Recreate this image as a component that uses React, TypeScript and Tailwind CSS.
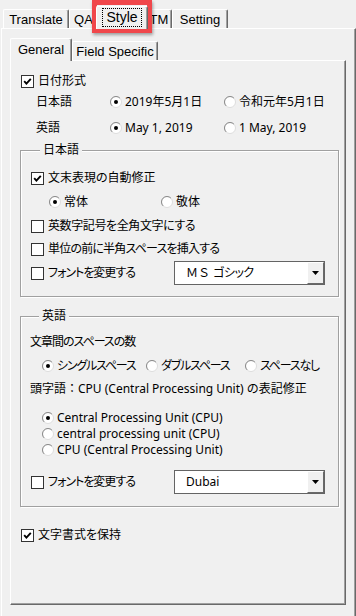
import React from 'react';

const Check = ({ checked }: { checked?: boolean }) => (
  <span className="flex h-[13px] w-[13px] shrink-0 items-center justify-center border border-[#333] bg-white">
    {checked ? (
      <svg width="9" height="9" viewBox="0 0 9 9">
        <path d="M1.2 4.2 L3.4 6.6 L7.8 1.8" fill="none" stroke="#000" strokeWidth="1.9" />
      </svg>
    ) : null}
  </span>
);

const Radio = ({ checked }: { checked?: boolean }) => (
  <svg width="12" height="12" viewBox="0 0 12 12" className="shrink-0">
    <circle cx="6" cy="6" r="5.5" fill="#fff" stroke="#dcdcdc" />
    <path d="M2.1 9.9 A5.5 5.5 0 0 1 9.9 2.1" fill="none" stroke="#8a8a8a" />
    {checked ? <circle cx="6" cy="6" r="2" fill="#000" /> : null}
  </svg>
);

const Select = ({ children }: { children: React.ReactNode }) => (
  <div className="flex h-[24px] w-[151px] items-center border border-[#646464] bg-white">
    <span className="flex-1 pl-[11px]">{children}</span>
    <span className="flex h-full w-[17px] items-center justify-center border-l border-t border-l-white border-t-white border-r border-b border-r-[#696969] border-b-[#696969] bg-[#f0f0f0]">
      <svg width="7" height="4" viewBox="0 0 7 4">
        <path d="M0 0 H7 L3.5 4 Z" fill="#000" />
      </svg>
    </span>
  </div>
);

type TabProps = {
  label: string;
  selected?: boolean;
  focus?: boolean;
  width: string;
};

const Tab = ({ label, selected, focus, width }: TabProps) => (
  <div
    className={`flex items-center justify-center rounded-t-[2px] border-l border-t border-r border-l-white border-t-white border-r-[#696969] bg-[#f0f0f0] shadow-[inset_-1px_0_0_#a0a0a0] ${width} ${
      selected ? 'relative z-10 -mb-[1px] h-[23px] pb-[1px]' : 'h-[19px]'
    }`}
  >
    <span className={focus ? 'border border-dotted border-black px-[3px] text-[14px] leading-[17px]' : 'leading-[15px]'}>
      {label}
    </span>
  </div>
);

const Row = ({ className, children }: { className: string; children: React.ReactNode }) => (
  <div className={`flex items-center ${className}`}>{children}</div>
);

const Opt = ({ checked, label, className }: { checked?: boolean; label: string; className?: string }) => (
  <div className={`flex items-center ${className ?? ''}`}>
    <Radio checked={checked} />
    <span className="ml-[3px] whitespace-nowrap">{label}</span>
  </div>
);

const Legend = ({ label }: { label: string }) => (
  <legend className="ml-[9px] bg-[#f0f0f0] px-[3px] leading-[16px]">{label}</legend>
);

const App = () => {
  return (
    <div className="relative h-[616px] w-[356px] overflow-hidden bg-[#f0f0f0] font-['Liberation_Sans','Noto_Sans_CJK_JP',sans-serif] text-[13px] text-black">
      {/* outer tabs */}
      <div className="flex h-[28px] items-end pl-[3px]">
        <Tab label="Translate" width="w-[66px]" />
        <Tab label="QA" width="w-[29px]" />
        <Tab label="Style" selected focus width="w-[52px] -ml-[2px] -mr-[2px]" />
        <Tab label="TM" width="w-[26px]" />
        <Tab label="Setting" width="w-[56px]" />
      </div>

      {/* outer panel */}
      <div className="ml-[1px] h-[588px] border-l border-t border-r border-l-white border-t-white border-r-[#696969] pl-[8px] pt-[8px] shadow-[inset_-1px_0_0_#a0a0a0]">
        <div className="flex h-[23px] items-end">
          <Tab label="General" selected width="w-[62px]" />
          <Tab label="Field Specific" width="w-[86px]" />
        </div>

        <div className="h-[545px] w-[336px] border-l border-t border-r border-b border-l-white border-t-white border-r-[#696969] border-b-[#696969] font-['Noto_Sans','Noto_Sans_CJK_JP',sans-serif] text-[12px] leading-[16px] shadow-[inset_-1px_-1px_0_#a0a0a0] [font-feature-settings:'palt']">
          <Row className="mt-[11px] h-[18px] pl-[10px]">
            <Check checked />
            <span className="ml-[4px]">日付形式</span>
          </Row>
          <Row className="mt-[3px] h-[18px] pl-[25px]">
            <span className="w-[74px]">日本語</span>
            <Opt checked label="2019年5月1日" className="w-[114px]" />
            <Opt label="令和元年5月1日" />
          </Row>
          <Row className="mt-[8px] h-[18px] pl-[25px]">
            <span className="w-[74px]">英語</span>
            <Opt checked label="May 1, 2019" className="w-[114px]" />
            <Opt label="1 May, 2019" />
          </Row>

          <fieldset className="ml-[9px] mt-[5px] w-[319px] border border-[#a0a0a0] pb-[11px] pl-[10px] shadow-[inset_1px_1px_0_#fff,1px_1px_0_#fff]">
            <Legend label="日本語" />
            <Row className="mt-[11px] h-[18px]">
              <Check checked />
              <span className="ml-[4px]">文末表現の自動修正</span>
            </Row>
            <Row className="mt-[6px] h-[18px] pl-[18px]">
              <Opt checked label="常体" className="w-[112px]" />
              <Opt label="敬体" />
            </Row>
            <Row className="mt-[6px] h-[18px]">
              <Check />
              <span className="ml-[4px] tracking-[-0.4px]">英数字記号を全角文字にする</span>
            </Row>
            <Row className="mt-[5px] h-[18px]">
              <Check />
              <span className="ml-[4px] tracking-[-0.8px]">単位の前に半角スペースを挿入する</span>
            </Row>
            <Row className="mt-[3px] h-[24px]">
              <div className="flex w-[143px] items-center">
                <Check />
                <span className="ml-[4px] tracking-[-1px]">フォントを変更する</span>
              </div>
              <Select>
                <span className="[font-feature-settings:normal]">ＭＳ </span>
                <span className="tracking-[-0.5px]">ゴシック</span>
              </Select>
            </Row>
          </fieldset>

          <fieldset className="ml-[9px] mt-[11px] w-[319px] border border-[#a0a0a0] pb-[12px] pl-[9px] shadow-[inset_1px_1px_0_#fff,1px_1px_0_#fff]">
            <Legend label="英語" />
            <Row className="mt-[9px] h-[18px]">
              <span className="tracking-[-1px]">文章間のスペースの数</span>
            </Row>
            <Row className="mt-[6px] h-[18px] pl-[12px] tracking-[-1.2px]">
              <Opt checked label="シングルスペース" className="w-[104px]" />
              <Opt label="ダブルスペース" className="w-[99px]" />
              <Opt label="スペースなし" />
            </Row>
            <Row className="mt-[5px] h-[18px]">
              <span className="[font-feature-settings:normal]">頭字語：CPU (Central Processing Unit) の表記修正</span>
            </Row>
            <div className="mt-[12px] flex flex-col pl-[12px]">
              <Opt checked label="Central Processing Unit (CPU)" className="h-[16px]" />
              <Opt label="central processing unit (CPU)" className="h-[16px]" />
              <Opt label="CPU (Central Processing Unit)" className="h-[16px]" />
            </div>
            <Row className="mt-[12px] h-[24px] pl-[1px]">
              <div className="flex w-[143px] items-center">
                <Check />
                <span className="ml-[4px] tracking-[-1px]">フォントを変更する</span>
              </div>
              <Select>Dubai</Select>
            </Row>
          </fieldset>

          <Row className="mt-[19px] h-[18px] pl-[10px]">
            <Check checked />
            <span className="ml-[4px]">文字書式を保持</span>
          </Row>
        </div>
      </div>

      {/* highlight annotation around the Style tab */}
      <div className="absolute left-[92px] top-0 h-[33px] w-[60px] border-[5px] border-[#f0474b] shadow-[1px_2px_3px_rgba(0,0,0,0.35)]" />
    </div>
  );
};

export default App;
